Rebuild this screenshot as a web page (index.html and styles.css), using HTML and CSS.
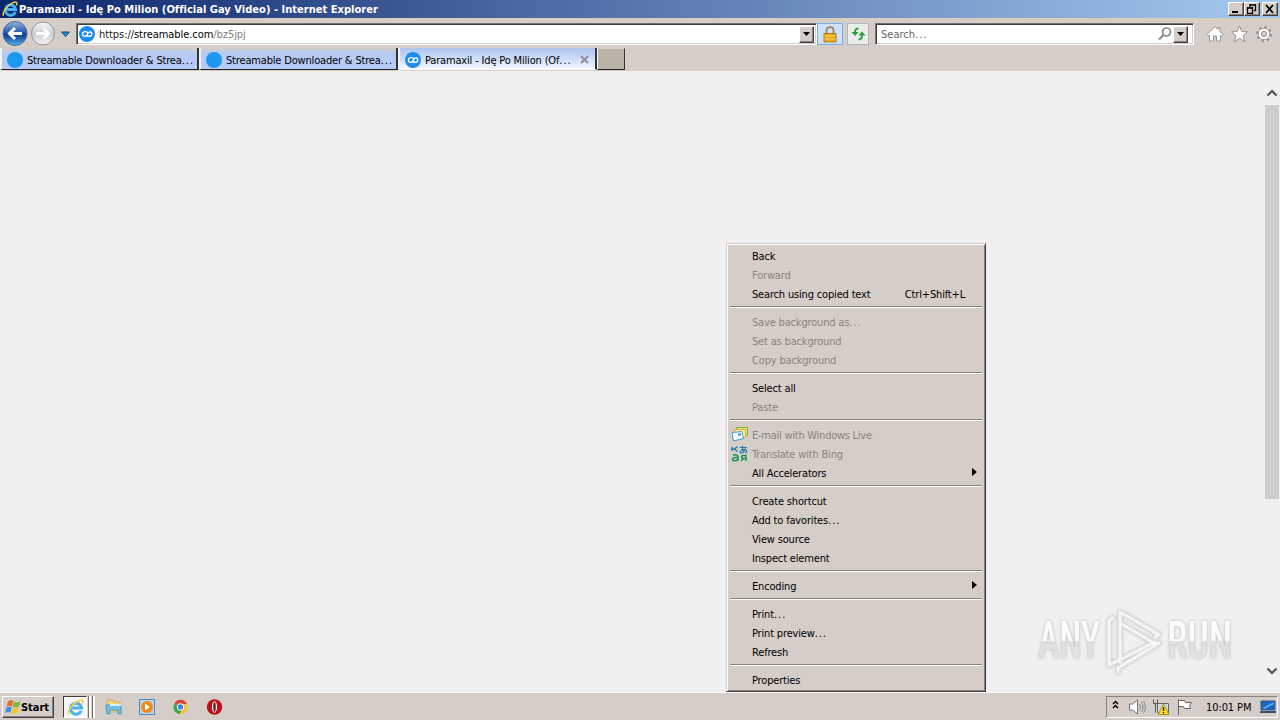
FILE: index.html
```html
<!DOCTYPE html>
<html lang="en">
<head>
  <meta charset="UTF-8" />
  <meta name="viewport" content="width=device-width, initial-scale=1.0" />
  <title>Paramaxil - Idę Po Milion (Official Gay Video)</title>
  <link rel="stylesheet" href="styles.css">
</head>
<body>
  <svg class="defs" width="0" height="0">
    <defs>
      <linearGradient id="blue" x1="0" y1="0" x2="0" y2="1">
        <stop offset="0" stop-color="#8fb3e2"/><stop offset=".45" stop-color="#245cae"/>
        <stop offset=".55" stop-color="#0b3c8c"/><stop offset="1" stop-color="#4fb2ee"/>
      </linearGradient>
      <linearGradient id="silver" x1="0" y1="0" x2="0" y2="1">
        <stop offset="0" stop-color="#fafafa"/><stop offset=".5" stop-color="#c9ccd1"/><stop offset="1" stop-color="#f4f4f4"/>
      </linearGradient>
      <linearGradient id="mark" x1="0" y1="0" x2="0" y2="1">
        <stop offset="0" stop-color="#fff"/><stop offset=".5" stop-color="#f9f9f9"/>
        <stop offset=".52" stop-color="#dedede"/><stop offset="1" stop-color="#e6e6e6"/>
      </linearGradient>
      <symbol id="ie" viewBox="0 0 16 16">
        <path d="M13.400 11A5.200 5.200 0 1 1 13.700 8.500H5" fill="none" stroke="#49b3f0" stroke-width="2.800"/>
        <path d="M1.600 14.800C-.6 12 6 3.600 11 1.600c3.600-1.400 4.600.2 3.400 2.800" fill="none" stroke="#f5cf3c" stroke-width="1.500"/>
      </symbol>
      <symbol id="streamable" viewBox="0 0 16 16">
        <circle cx="8" cy="8" r="8" fill="#1b8cf0"/>
        <path d="M8.600 6.500C7.200 5 3.400 5.300 3.400 8s3.200 3.200 4.600 1L9 7.200c1.200-2 3.800-1.600 3.800.8 0 2.600-3.200 2.800-4.600 1.600" fill="none" stroke="#fff" stroke-width="1.400"/>
      </symbol>
    </defs>
  </svg>

  <div class="window">
    <header class="title-bar">
      <svg class="title-icon" width="16" height="16"><use href="#ie"/></svg>
      <span class="title-text">Paramaxil - Idę Po Milion (Official Gay Video) - Internet Explorer</span>
      <div class="window-buttons">
        <button><svg width="12" height="10"><path d="M2 8h6" stroke="#000" stroke-width="2"/></svg></button>
        <button><svg width="12" height="10"><path d="M4 1h6M4 3.500V0M9.500 0v6.500H8M1 4h6M1.500 3v6.500h5V3" fill="none" stroke="#000" stroke-width="1.300"/></svg></button>
        <button class="close"><svg width="12" height="10"><path d="M2 1l7 8M9 1L2 9" stroke="#000" stroke-width="1.700"/></svg></button>
      </div>
    </header>

    <div class="address-row">
      <svg class="nav" width="72" height="28" viewBox="0 0 72 28">
        <circle cx="15" cy="13.500" r="12" fill="url(#blue)" stroke="#54698f"/>
        <path d="M22 13.500H10M15 8l-5.500 5.500L15 19" fill="none" stroke="#fff" stroke-width="3"/>
        <circle cx="43" cy="13.500" r="11.500" fill="url(#silver)" stroke="#8f9299"/>
        <path d="M36 13.500h12M43.500 8.500l5 5-5 5" fill="none" stroke="#fff" stroke-width="3"/>
        <path d="M61.500 12h8L65.500 16.500z" fill="#2387bd" stroke="#174e80"/>
      </svg>
      <div class="field address">
        <svg width="16" height="16"><use href="#streamable"/></svg>
        <span class="url"><span class="scheme">https://</span>streamable.com<span class="dim">/bz5jpj</span></span>
        <button class="drop"><svg width="8" height="4"><path d="M0 0h7L3.500 4z"/></svg></button>
      </div>
      <div class="tool lock">
        <svg width="14" height="17" viewBox="0 0 14 17">
          <path d="M3.500 8V4.500C3.500 0 10.500 0 10.500 4.500V8" fill="none" stroke="#a28350" stroke-width="1.800"/>
          <path d="M1 7.500h12v8.500H1z" fill="#e9a920" stroke="#b07a18"/>
          <path d="M1.500 10h11M1.500 13h11" stroke="#fad35c"/>
        </svg>
      </div>
      <div class="tool refresh">
        <svg width="15" height="14" viewBox="0 0 15 14">
          <path d="M7.500 1.500C5 1.500 4 2.500 4 5.500M7.500 12.500c2.500 0 3.500-1 3.500-4" fill="none" stroke="#2b9a3b" stroke-width="1.800"/>
          <path d="M.5 5h7L4 9zM7.500 8.500h7L11 4.500z" fill="#2b9a3b"/>
        </svg>
      </div>
      <div class="field search">
        <span class="placeholder">Search<span class="dots">...</span></span>
        <svg width="14" height="14" viewBox="0 0 14 14"><circle cx="8.500" cy="5" r="4" fill="none" stroke="#888" stroke-width="1.700"/><path d="M5.500 8L1 12.500" stroke="#888" stroke-width="2"/></svg>
        <button class="drop"><svg width="8" height="4"><path d="M0 0h7L3.500 4z"/></svg></button>
      </div>
      <svg class="commands" width="68" height="18" viewBox="0 0 68 18" fill="#fff" stroke="#969391">
        <path d="M1 9.500L9 1.500l3 3V2.500h2v4l3 3-1.500 1.500-1-1V16h-4v-5h-3v5h-4v-6l-1 1z"/>
        <path d="M33.500 1l2.300 5.500 5.700.4-4.300 3.800 1.300 5.800-5-3.100-5 3.100 1.300-5.800-4.300-3.800 5.700-.4z"/>
        <circle cx="58" cy="9" r="6.700" stroke-width="2.500" stroke-dasharray="2.500 2.760"/>
        <circle cx="58" cy="9" r="5.800"/>
        <circle cx="58" cy="9" r="2.700" fill="#d5cec8"/>
      </svg>
    </div>

    <nav class="tabs">
      <div class="tab"><i class="dot"></i><span class="label">Streamable Downloader &amp; Strea<span class="dots">...</span></span></div>
      <div class="tab"><i class="dot"></i><span class="label">Streamable Downloader &amp; Strea<span class="dots">...</span></span></div>
      <div class="tab active">
        <svg width="16" height="16"><use href="#streamable"/></svg>
        <span class="label">Paramaxil - Idę Po Milion (Of<span class="dots">...</span></span>
        <svg class="tab-close" width="9" height="9"><path d="M1 1l7 7M8 1L1 8" stroke="#8e909a" stroke-width="2"/></svg>
      </div>
      <div class="new-tab"></div>
    </nav>

    <main class="page">
      <svg class="watermark" width="204" height="72" viewBox="0 0 204 72">
        <g class="mark-text" fill="url(#mark)">
          <text x="4" y="53" textLength="62" lengthAdjust="spacingAndGlyphs">ANY</text>
          <text x="133" y="53" textLength="65" lengthAdjust="spacingAndGlyphs">RUN</text>
        </g>
        <g class="mark-logo" fill="none" stroke-linejoin="round" stroke-linecap="round">
          <path class="mark-edge" d="M86 57V7l39 22.500-4 3M120 38L86 18M79 13l-4 3v44l46-23M84 67v-4l41-25"/>
          <path class="mark-line" d="M86 57V7l39 22.500-4 3M120 38L86 18M79 13l-4 3v44l46-23M84 67v-4l41-25"/>
        </g>
      </svg>
      <div class="scrollbar">
        <svg width="12" height="8"><path d="M1.500 6.500L6 2l4.500 4.500" fill="none" stroke="#555" stroke-width="2.200"/></svg>
        <div class="thumb"></div>
        <svg width="12" height="8"><path d="M1.500 1.500L6 6l4.500-4.500" fill="none" stroke="#555" stroke-width="2.200"/></svg>
      </div>
    </main>

    <footer class="taskbar">
      <button class="start">
        <svg width="16" height="16" viewBox="0 0 16 16">
          <path d="M3 2.500c2-1.500 3.500-1.500 5.300-.5L7 7.500C5.500 6.500 4 6.500 1.600 7.700z" fill="#ea6a2c"/>
          <path d="M9 2.500c2 1 3.500 1 6.500-.3l-1.400 5.500c-2 1-4 1-6.300 0z" fill="#7cbb3c"/>
          <path d="M1.300 8.700c2-1.200 3.700-1.200 5.400-.2l-1.300 5.200c-1.500-1-3-1-5.400.2z" fill="#3f8ee0"/>
          <path d="M7.500 8.700c2 1 3.700 1 6.200 0L12.300 14c-2 1.200-4 1-6 0z" fill="#f7c52c"/>
        </svg>
        Start
      </button>
      <div class="task-ie"><svg width="17" height="17"><use href="#ie"/></svg></div>
      <i class="grip"></i><i class="grip"></i>
      <svg class="quick" width="120" height="18" viewBox="0 0 120 18">
        <path d="M2 2h6l1 2h6v10H2z" fill="#f2d77d" stroke="#d1ad57"/>
        <path d="M1 7h15v9h-3v-4H5v4H2z" fill="#77bee0" stroke="#4d9cc2"/>
        <path d="M5 7h11" stroke="#d6eff6" stroke-width="2"/>
        <path d="M34.500 1.500h15v15h-15z" fill="#b6d5ef" stroke="#4c88c0"/>
        <circle cx="42" cy="9" r="6" fill="#f18a15"/><path d="M40 5.500v7l5-3.500z" fill="#fff"/>
        <circle cx="75.500" cy="9" r="7" fill="#f4c52b"/>
        <path d="M75.500 9L69.500 5.400A7 7 0 0 1 82 6H75.500z" fill="#dc4335"/>
        <path d="M75.500 9L69.500 5.400A7 7 0 0 0 74.500 16l3-5z" fill="#36a852"/>
        <circle cx="75.500" cy="9" r="3.300" fill="#3f80e8" stroke="#fff"/>
        <circle cx="109.500" cy="9" r="7.700" fill="#bd1118"/><ellipse cx="109.500" cy="9" rx="2.600" ry="5.800" fill="#fff"/><ellipse cx="109.500" cy="9" rx="1.300" ry="5" fill="#8a1114"/>
      </svg>
      <div class="tray">
        <svg width="84" height="18" viewBox="0 0 84 18">
          <path d="M2 6l2.500-2.500L7 6M2 10l2.500-2.500L7 10" fill="none" stroke="#000" stroke-width="1.500"/>
          <path d="M18.500 6h3l5-4v14l-5-4h-3z" fill="#fff" stroke="#777"/>
          <path d="M28.500 6c1 2 1 4 0 6M30.500 4c2 3 2 7 0 10M32.500 3c2.500 4 2.500 8 0 12" fill="none" stroke="#888"/>
          <path d="M46.500 5.500h11v9h-11z" fill="#c9dce8" stroke="#666"/>
          <path d="M42.500 1.500v4h2v9M46.500 1.500v4h-2" fill="none" stroke="#555"/>
          <path d="M52.500 6l5.500 10.500H47z" fill="#ffd831" stroke="#b58e16"/><path d="M52.500 9v4M52.500 14v1.500" stroke="#222" stroke-width="1.300"/>
          <path d="M67.500 17V1.500M67.500 2.500h6l1 2h6l-2 3 1 3h-6l-1-2h-5" fill="#fff" stroke="#666"/>
        </svg>
        <span class="clock">10:01 PM</span>
        <svg width="16" height="14" viewBox="0 0 16 14"><path d="M1 1h14v9H1z" fill="#1764c2" stroke="#3a5579"/><path d="M2 8L14 2v2L5 9z" fill="#59a6ee"/><path d="M0 12h16" stroke="#38536d" stroke-width="2"/></svg>
      </div>
    </footer>

    <div class="menu">
      <div class="item">Back</div>
      <div class="item disabled">Forward</div>
      <div class="item">Search using copied text<span class="shortcut">Ctrl+Shift+L</span></div>
      <div class="separator"></div>
      <div class="item disabled">Save background as<span class="dots">...</span></div>
      <div class="item disabled">Set as background</div>
      <div class="item disabled">Copy background</div>
      <div class="separator"></div>
      <div class="item">Select all</div>
      <div class="item disabled">Paste</div>
      <div class="separator"></div>
      <div class="item disabled mail">
        <svg class="item-icon" width="17" height="17" viewBox="0 0 17 17"><path d="M5.500 1.500h11v8h-11z" fill="#d7ed9b" stroke="#75b52c"/><path d="M3.500 3.500h11v8h-11z" fill="#ffe99c" stroke="#eda62b"/><path d="M1 6.500l10-1 1.500 7-10 2.500z" fill="#eff9ff" stroke="#45a0d7"/><path d="M7 7.500h3v2H7z" fill="#318fd0"/></svg>
        E-mail with Windows Live
      </div>
      <div class="item disabled">
        <svg class="item-icon" width="17" height="17" viewBox="0 0 17 17" fill="none" stroke-width="1.500">
          <path d="M1 2v4M1 4h2M6.500 1.500L3.500 4l3 2.500" stroke="#287dad"/>
          <path d="M8.500 2.500H16M11.500.5c-.5 3 0 5 1 7M14.500 3.500c-1 3-3 4.500-4.500 4.500-2.500 0 0-4 3.500-3.500 3 .5 3 3 .5 3.500" stroke="#287dad" stroke-width="1.200"/>
          <path d="M2 10.500c3-1.500 5-.5 5 1.500v4M7 12.500c-3-.3-5.500.3-5.500 2s4 2 5.500-.5" stroke="#21945b"/>
          <path d="M15 16v-5.500h-3c-2 0-2 3 0 3h3M12.500 13.500L10 16" stroke="#21945b"/>
        </svg>
        Translate with Bing
      </div>
      <div class="item">All Accelerators<span class="arrow"></span></div>
      <div class="separator"></div>
      <div class="item">Create shortcut</div>
      <div class="item">Add to favorites<span class="dots">...</span></div>
      <div class="item">View source</div>
      <div class="item">Inspect element</div>
      <div class="separator"></div>
      <div class="item">Encoding<span class="arrow"></span></div>
      <div class="separator"></div>
      <div class="item">Print<span class="dots">...</span></div>
      <div class="item">Print preview<span class="dots">...</span></div>
      <div class="item">Refresh</div>
      <div class="separator"></div>
      <div class="item">Properties</div>
    </div>
  </div>
</body>
</html>
```
FILE: styles.css
```css
* {
  box-sizing: border-box;
}

body {
  margin: 0;
  font-family: Tahoma, 'DejaVu Sans Condensed', 'DejaVu Sans', sans-serif;
  font-stretch: condensed;
  font-size: 11px;
  letter-spacing: -0.17px;
  color: #000;
  overflow: hidden;
}

svg {
  display: block;
  flex: none;
}

.defs {
  position: absolute;
}

button {
  display: flex;
  align-items: center;
  justify-content: center;
  padding: 0;
  font: inherit;
  letter-spacing: inherit;
  color: #000;
  background: #d5cec8;
  border: 1px solid;
  border-color: #fff #404040 #404040 #fff;
  box-shadow: inset -1px -1px #89827d;
}

.dots {
  letter-spacing: 1px;
}

.window {
  position: relative;
  display: flex;
  flex-direction: column;
  width: 1280px;
  height: 720px;
  background: #d5cec8;
}

/* title bar */
.title-bar {
  display: flex;
  align-items: center;
  height: 18px;
  padding: 0 2px;
  background: linear-gradient(90deg, #0b256b, #a5c9ef);
  color: #fff;
}

.title-text {
  flex: 1;
  margin-left: 1px;
  font-weight: bold;
  letter-spacing: 0.03px;
}

.window-buttons {
  display: flex;
}

.window-buttons button {
  width: 16px;
  height: 14px;
}

.window-buttons .close {
  margin-left: 2px;
}

/* address row */
.address-row {
  display: flex;
  align-items: center;
  height: 30px;
  border-top: 2px solid #d5cfc1;
}

.nav {
  margin-right: 4px;
}

.field {
  display: flex;
  align-items: center;
  height: 22px;
  background: #fff;
  border: 1px solid;
  border-color: #77716c #fff #fff #77716c;
  box-shadow: inset 1px 1px #403d3b, inset -1px -1px #d5cec8;
}

.address {
  width: 741px;
  padding: 0 2px;
}

.url {
  flex: 1;
  margin-left: 4px;
  letter-spacing: -0.06px;
}

.scheme {
  color: #222;
}

.dim {
  color: #808080;
}

.drop {
  width: 15px;
  height: 17px;
}

.tool {
  display: flex;
  align-items: center;
  justify-content: center;
  height: 22px;
  border: 1px solid #b5b5b5;
}

.lock {
  width: 26px;
  background: #cfe2fa;
  border-color: #78aee7;
}

.refresh {
  width: 22px;
  margin-left: 4px;
  background: #e9eeeb;
}

.search {
  width: 319px;
  margin-left: 6px;
  padding: 0 5px;
}

.placeholder {
  flex: 1;
  color: #666;
  letter-spacing: 0;
}

.search .drop {
  margin-left: 1px;
}

.commands {
  margin-left: 12px;
}

/* tabs */
.tabs {
  display: flex;
  height: 23px;
  padding-bottom: 1px;
}

.tab {
  display: flex;
  align-items: center;
  width: 199px;
  height: 22px;
  padding: 2px 3px 0 5px;
  white-space: nowrap;
  background: linear-gradient(#d5cec8, #b5caf2 5px, #b9ccfa);
  border: solid;
  border-width: 0 2px 1px 2px;
  border-color: #fff #333 #222 #f3f3f3;
}

.label {
  flex: 1;
  margin-left: 4px;
  padding-top: 1px;
}

.tab.active {
  padding-right: 6px;
  background: linear-gradient(#adc3ef, #d3e0fa 12px, #f4f8ff);
  border-bottom-color: #f4f8ff;
}

.dot {
  flex: none;
  width: 16px;
  height: 16px;
  border-radius: 50%;
  background: #1c98ef;
}

.new-tab {
  width: 28px;
  background: #b9b3a8;
  border: 1px solid;
  border-color: #d5cec8 #333 #222 #fff;
}

/* page */
.page {
  flex: 1;
  display: flex;
  justify-content: flex-end;
  align-items: flex-end;
  background: #f0f0f0;
}

.watermark {
  margin: 0 26px 15px 0;
  overflow: visible;
}

.mark-text {
  font-family: Roboto, sans-serif;
  font-size: 52px;
  font-weight: 500;
  letter-spacing: 0;
  filter: drop-shadow(0 0 1.5px #b5b5b5);
}

.mark-logo {
  filter: drop-shadow(0 0 1.5px #c4c4c4);
}

.mark-edge {
  stroke: #dcdcdc;
  stroke-width: 5px;
}

.mark-line {
  stroke: #f5f5f5;
  stroke-width: 3px;
}

.scrollbar {
  display: flex;
  flex-direction: column;
  align-items: center;
  width: 16px;
  height: 100%;
  padding: 18px 1px 17px 0;
}

.scrollbar svg:last-child {
  margin-top: auto;
}

.thumb {
  width: 14px;
  height: 394px;
  margin-top: 8px;
  background: #cdcdcd;
}

/* taskbar */
.taskbar {
  display: flex;
  align-items: center;
  height: 28px;
  padding: 1px 2px 0;
  border-top: 1px solid #fff;
}

.start {
  width: 52px;
  height: 22px;
  padding-right: 2px;
  font-weight: bold;
  letter-spacing: 0;
}

.task-ie {
  display: flex;
  align-items: center;
  justify-content: center;
  width: 24px;
  height: 22px;
  margin-left: 9px;
  background: #f7f5f3;
  border: 1px solid;
  border-color: #403d3b #fff #fff #403d3b;
}

.grip {
  width: 3px;
  height: 22px;
  margin-left: 1px;
  border-left: 1px solid #77716c;
  border-right: 2px solid #fff;
}

.quick {
  margin-left: 10px;
}

.tray {
  display: flex;
  align-items: center;
  width: 172px;
  height: 22px;
  margin-left: auto;
  padding-left: 4px;
  border: 1px solid;
  border-color: #89827d #fff #fff #89827d;
}

.clock {
  width: 47px;
  margin: 0 7px 0 11px;
  letter-spacing: -0.1px;
  white-space: nowrap;
}

/* context menu */
.menu {
  position: absolute;
  left: 726px;
  top: 243px;
  width: 260px;
  padding: 2px;
  background: #d5cec8;
  border: 1px solid;
  border-color: #d5cec8 #403d3b #403d3b #d5cec8;
  box-shadow: inset 1px 1px #fff, inset -1px -1px #89827d;
}

.item {
  display: flex;
  align-items: center;
  height: 19px;
  padding: 2px 18px 0 23px;
  white-space: nowrap;
}

.item.disabled {
  color: #89837f;
}

.item.mail {
  letter-spacing: -0.25px;
}

.shortcut {
  margin-left: auto;
}

.item-icon {
  margin: -3px 4px 0 -21px;
}

.arrow {
  margin: -4px -12px 0 auto;
  border: solid transparent;
  border-width: 4px 0 4px 5px;
  border-left-color: #000;
}

.separator {
  height: 2px;
  margin: 3px 1px 4px;
  border-top: 1px solid #89827d;
  border-bottom: 1px solid #fff;
}
```
